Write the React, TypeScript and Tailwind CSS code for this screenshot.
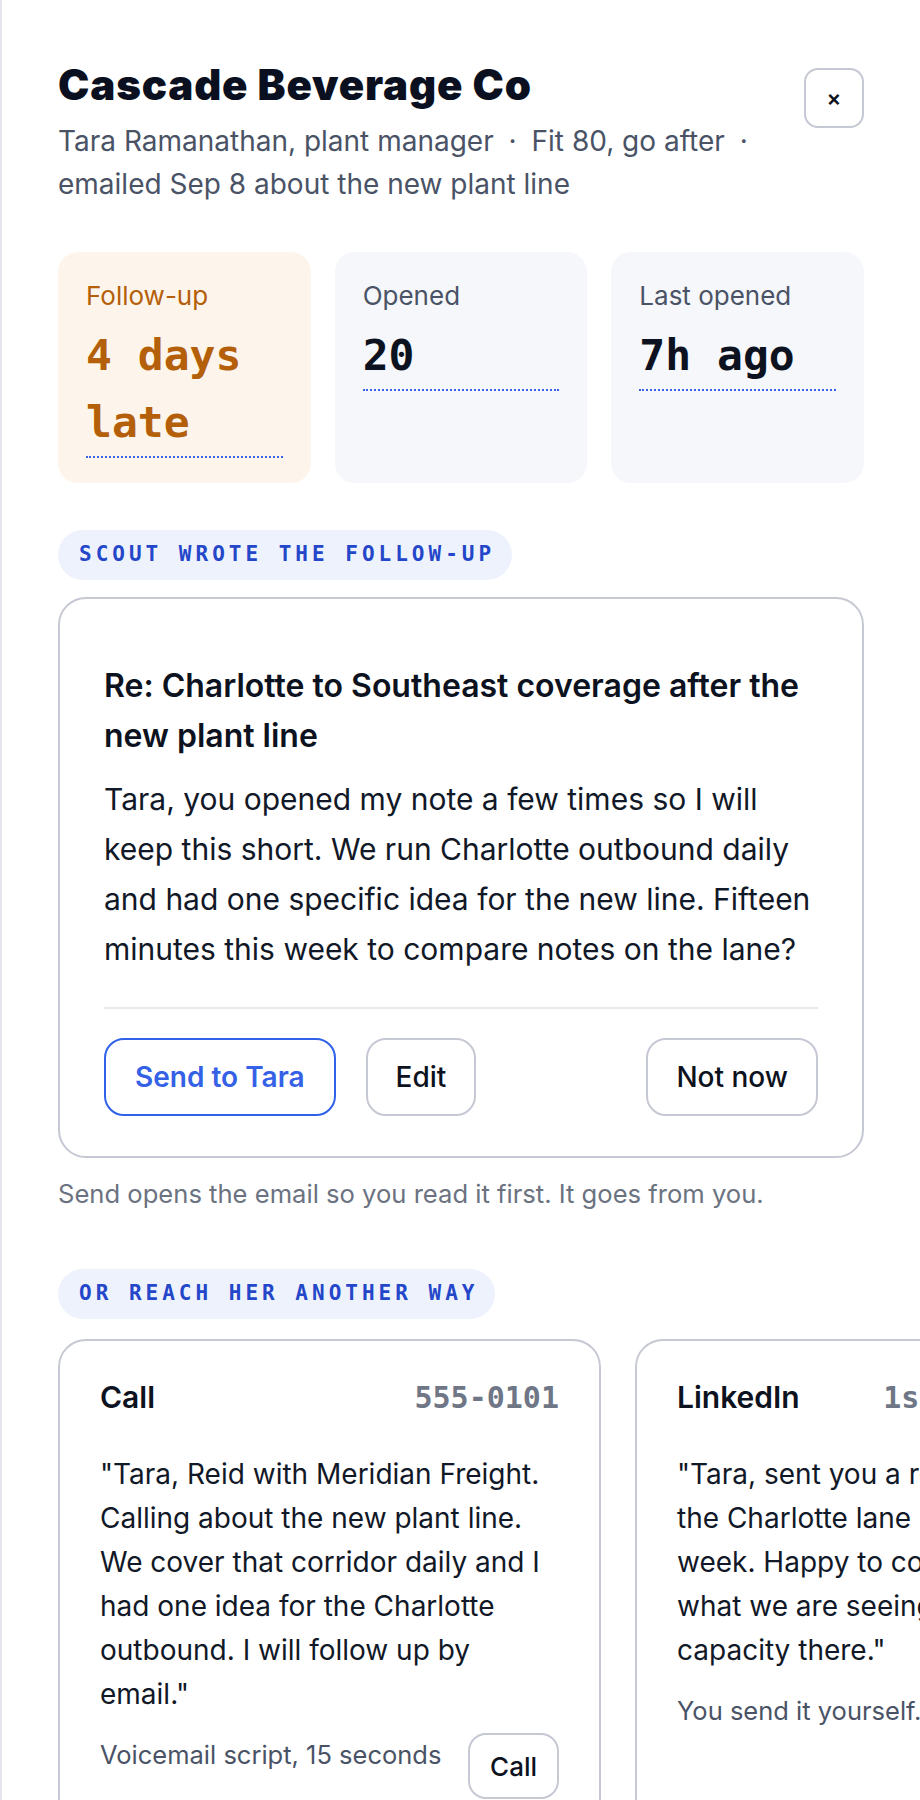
import React from 'react';

const mono = "font-[family-name:'DejaVu_Sans_Mono',monospace]";

type StatProps = { label: string; value: string; tone?: 'late' | 'plain' };

const Stat: React.FC<StatProps> = ({ label, value, tone = 'plain' }) => {
  const late = tone === 'late';
  return (
    <div className={`rounded-[20px] px-[28px] pt-[28px] pb-[25px] ${late ? 'bg-[#fdf5eb]' : 'bg-[#f5f7fa]'}`}>
      <div className={`text-[26px] leading-[32px] ${late ? 'text-[#b45f0a]' : 'text-[#4a5366]'}`}>{label}</div>
      <div
        className={`mt-[10px] ${mono} text-[43px] leading-[67px] font-bold border-b-2 border-dotted border-[#3763e8] ${
          late ? 'text-[#b45f0a]' : 'text-[#0d1220]'
        }`}
      >
        {value}
      </div>
    </div>
  );
};

const Pill: React.FC<{ children: React.ReactNode }> = ({ children }) => (
  <div
    className={`inline-flex h-[50px] items-center rounded-full bg-[#eef2fd] pl-[21px] pr-[17px] ${mono} text-[21px] font-bold uppercase tracking-[4px] text-[#2446c9]`}
  >
    {children}
  </div>
);

type ChannelProps = { name: string; meta: string; script: React.ReactNode; note: string; action: string };

const ChannelCard: React.FC<ChannelProps> = ({ name, meta, script, note, action }) => (
  <div className="w-[543px] shrink-0 rounded-[28px] border-2 border-[#c6c9d3] px-[40px] pt-[34px] pb-[40px]">
    <div className="flex items-baseline justify-between gap-4">
      <span className="text-[30px] leading-[40px] font-semibold text-[#0d1220]">{name}</span>
      <span className={`${mono} text-[30px] font-bold text-[#6f7685]`}>{meta}</span>
    </div>
    <p className="mt-[32px] text-[28px] leading-[44px] text-[#111827]">{script}</p>
    <div className="mt-[17px] flex items-start justify-between gap-[16px]">
      <span className="mt-[5px] whitespace-nowrap text-[25.5px] leading-[33px] text-[#4a5366]">{note}</span>
      <button className="h-[66px] shrink-0 rounded-[18px] border-2 border-[#c6c9d3] px-[20px] text-[26px] font-medium text-[#0d1220]">
        {action}
      </button>
    </div>
  </div>
);

const App: React.FC = () => {
  return (
    <div className="min-h-screen overflow-hidden border-l-2 border-[#e4e5ec] bg-white px-[56px] pt-[61px] pb-[60px] font-[family-name:Inter,sans-serif]">
      {/* Header */}
      <div className="flex items-start justify-between gap-6">
        <div>
          <h1 className="text-[42px] leading-[48px] font-black tracking-[0.02em] text-[#0b1020]">Cascade Beverage Co</h1>
          <p className="mt-[11px] text-[28px] leading-[43px] text-[#4a5366]">
            Tara Ramanathan, plant manager <span className="mx-[7px]">·</span> Fit 80, go after{' '}
            <span className="mx-[7px]">·</span> emailed Sep 8 about the new plant line
          </p>
        </div>
        <button className="mt-[7px] flex h-[60px] w-[60px] shrink-0 items-center justify-center rounded-[14px] border-2 border-[#c6c9d3] text-[22px] font-semibold text-[#0d1220]">
          ×
        </button>
      </div>

      {/* Stats */}
      <div className="mt-[46px] grid grid-cols-3 gap-6">
        <Stat label="Follow-up" value="4 days late" tone="late" />
        <Stat label="Opened" value="20" />
        <Stat label="Last opened" value="7h ago" />
      </div>

      {/* Drafted follow-up */}
      <div className="mt-[47px]">
        <Pill>Scout wrote the follow-up</Pill>
      </div>

      <div className="mt-[17px] rounded-[28px] border-2 border-[#c6c9d3] px-[44px] pt-[62px] pb-[40px]">
        <h2 className="text-[32px] leading-[50px] font-semibold text-[#0d1220]">
          Re: Charlotte to Southeast coverage after the new plant line
        </h2>
        <p className="mt-[13px] text-[30px] leading-[50px] text-[#111827]">
          Tara, you opened my note a few times so I will keep this short. We run Charlotte outbound daily and had one
          specific idea for the new line. Fifteen minutes this week to compare notes on the lane?
        </p>
        <div className="mt-[33px] h-[2px] bg-[#e8e9ee]" />
        <div className="mt-[29px] flex items-center gap-[30px]">
          <button className="h-[78px] rounded-[20px] border-2 border-[#2f62e8] px-[29px] text-[28px] font-semibold text-[#3461e6]">
            Send to Tara
          </button>
          <button className="h-[78px] rounded-[20px] border-2 border-[#c6c9d3] px-[28px] text-[28px] font-medium text-[#0d1220]">
            Edit
          </button>
          <button className="ml-auto h-[78px] rounded-[20px] border-2 border-[#c6c9d3] px-[28px] text-[28px] font-medium text-[#0d1220]">
            Not now
          </button>
        </div>
      </div>
      <p className="mt-[19px] text-[25.6px] leading-[33px] text-[#6b7280]">
        Send opens the email so you read it first. It goes from you.
      </p>

      {/* Other channels */}
      <div className="mt-[59px]">
        <Pill>Or reach her another way</Pill>
      </div>
      <div className="mt-[20px] flex gap-[34px]">
        <ChannelCard
          name="Call"
          meta="555-0101"
          script={'"Tara, Reid with Meridian Freight. Calling about the new plant line. We cover that corridor daily and I had one idea for the Charlotte outbound. I will follow up by email."'}
          note="Voicemail script, 15 seconds"
          action="Call"
        />
        <ChannelCard
          name="LinkedIn"
          meta="1st connection"
          script={
            <>
              "Tara, sent you a request about
              <br />
              the Charlotte lane earlier this
              <br />
              week. Happy to compare notes on
              <br />
              what we are seeing for outbound
              <br />
              capacity there."
            </>
          }
          note="You send it yourself."
          action="Open"
        />
      </div>
    </div>
  );
};

export default App;
